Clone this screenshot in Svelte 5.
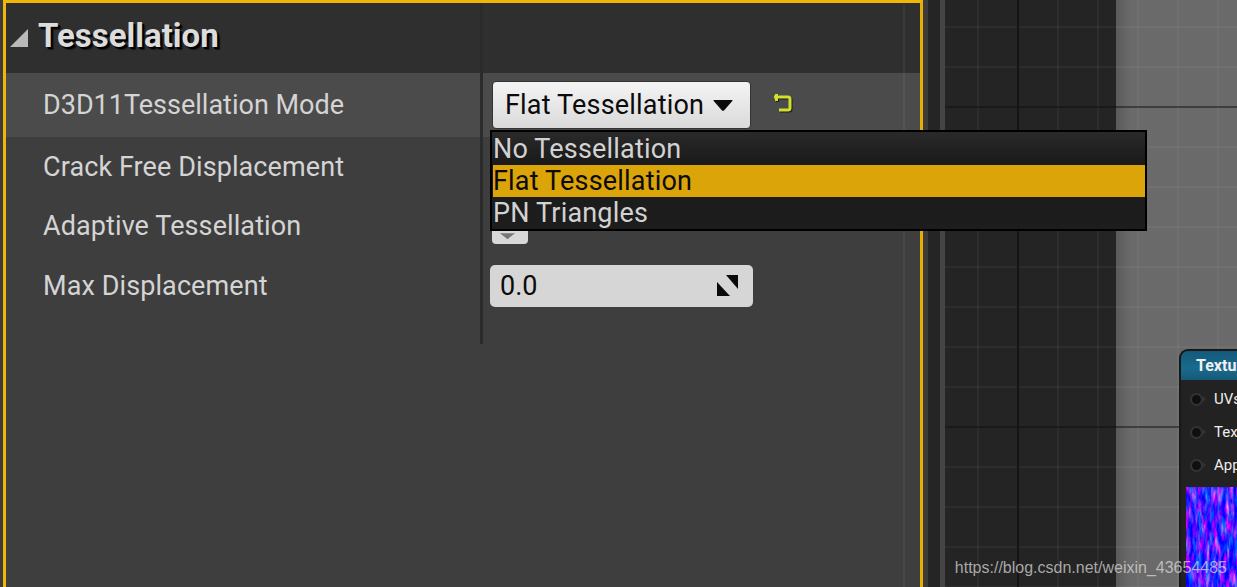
<script lang="ts">
  let options = ['No Tessellation', 'Flat Tessellation', 'PN Triangles']
  let selected = 'Flat Tessellation'
  let pins = ['UVs', 'Tex', 'App']
</script>

<div class="screen">
  <div class="gutter"></div>
  <section class="panel">
    <header class="section-head">
      <div class="name-cell">
        <svg class="arrow" width="18" height="18" viewBox="0 0 18 18"><path d="M18 0V18H0Z" fill="#b9b9b9" /></svg>
        <h2>Tessellation</h2>
      </div>
      <div class="value-cell"></div>
    </header>

    <div class="row hot">
      <div class="name-cell"><span class="label">D3D11Tessellation Mode</span></div>
      <div class="value-cell">
        <button class="combo">
          <span>{selected}</span>
          <svg width="20" height="11" viewBox="0 0 20 11"><path d="M1 0H19Q20 0 19.300 1L11 10.500Q10 11 9 10.500L0.700 1Q0 0 1 0Z" fill="#0b0b0b" /></svg>
        </button>
        <svg class="reset" width="22" height="26" viewBox="0 0 22 26">
          <g fill="none" stroke="#1c1c1c" stroke-width="3" transform="translate(1 1)">
            <path d="M2 5H16a2 2 0 0 1 2 2v9a2 2 0 0 1-2 2H7M4.500 2v7" />
          </g>
          <g fill="none" stroke="#d2e02c" stroke-width="3">
            <path d="M2 5H16a2 2 0 0 1 2 2v9a2 2 0 0 1-2 2H7M4.500 2v7" />
          </g>
        </svg>
        <ul class="popup">
          {#each options as opt}
            <li class:active={opt === selected}>{opt}</li>
          {/each}
        </ul>
      </div>
    </div>

    <div class="row">
      <div class="name-cell"><span class="label">Crack Free Displacement</span></div>
      <div class="value-cell"></div>
    </div>

    <div class="row">
      <div class="name-cell"><span class="label">Adaptive Tessellation</span></div>
      <div class="value-cell">
        <span class="check"><i></i></span>
      </div>
    </div>

    <div class="row">
      <div class="name-cell"><span class="label">Max Displacement</span></div>
      <div class="value-cell">
        <div class="number">
          <span>0.0</span>
          <svg width="21" height="21" viewBox="0 0 21 21">
            <path d="M9 0H21V14Z" fill="#0a0a0a" />
            <path d="M0 7V21H13Z" fill="#0a0a0a" />
          </svg>
        </div>
      </div>
    </div>

    <div class="row tail">
      <div class="name-cell"></div>
      <div class="value-cell"></div>
    </div>
  </section>

  <div class="splitter"></div>

  <main class="graph">
    <div class="node">
      <div class="node-title">Texture Sample</div>
      <div class="node-body">
        {#each pins as pin}
          <div class="pin"><b></b><span>{pin}</span></div>
        {/each}
        <svg class="texture" width="60" height="120">
          <filter id="normals" x="0" y="0" width="100%" height="100%" color-interpolation-filters="sRGB">
            <feTurbulence type="fractalNoise" baseFrequency="0.25 0.06" numOctaves="4" seed="7" />
            <feColorMatrix type="matrix" values="2.400 0 0 0 -0.950  0 1.200 0 0 -0.480  0 0 0 0 1  0 0 0 0 1" />
          </filter>
          <rect width="60" height="120" filter="url(#normals)" />
        </svg>
      </div>
    </div>
  </main>

  <div class="watermark">https://blog.csdn.net/weixin_43654485</div>
</div>

<style>
  :global(body) {
    margin: 0;
    background: #3a3a3a;
  }
  .screen {
    position: relative;
    display: flex;
    width: 1237px;
    height: 587px;
    overflow: hidden;
    font-family: Roboto, "Liberation Sans", sans-serif;
  }
  .gutter {
    width: 3px;
    background: #3b3b3b;
    flex: none;
  }
  .panel {
    width: 920px;
    flex: none;
    box-sizing: border-box;
    border: 3px solid #f2b705;
    border-bottom: 0;
    border-right-color: #e8ae06;
    background: #3e3e3e;
    position: relative;
  }
  .panel::after {
    content: '';
    position: absolute;
    top: 2px;
    bottom: 0;
    left: 897px;
    width: 2px;
    background: rgba(255, 255, 255, 0.05);
  }
  .section-head {
    display: grid;
    grid-template-columns: 474px 1fr;
    height: 70px;
    background: #2f2f2f;
  }
  .row {
    display: grid;
    grid-template-columns: 474px 1fr;
    height: 59.500px;
  }
  .row.hot {
    height: 64px;
    background: #4b4b4b;
  }
  .row.tail {
    height: 28px;
  }
  .name-cell {
    display: flex;
    align-items: center;
    padding-left: 37px;
  }
  .section-head .name-cell {
    padding: 0 0 6px 4px;
  }
  .value-cell {
    position: relative;
    display: flex;
    align-items: center;
    border-left: 3px solid #2b2b2b;
    padding-left: 8px;
  }
  .arrow {
    margin-top: 5px;
    flex: none;
  }
  h2 {
    margin: 0 0 0 10px;
    font-size: 33px;
    font-weight: 700;
    color: #dcdcdc;
    text-shadow: 2px 2px 0 #000, 3px 3px 1px rgba(0, 0, 0, 0.5);
  }
  .label {
    font-size: 27px;
    letter-spacing: 0.09px;
    color: #d4d4d4;
    white-space: nowrap;
  }
  .hot .label {
    letter-spacing: 0;
  }
  .combo {
    display: flex;
    align-items: center;
    justify-content: space-between;
    box-sizing: border-box;
    width: 259px;
    height: 48px;
    margin-left: 1px;
    padding: 0 17px 0 12px;
    border: 1px solid #333;
    border-radius: 4px;
    background: linear-gradient(#f4f4f4, #dadada);
    font: 27px Roboto, "Liberation Sans", sans-serif;
    letter-spacing: 0.18px;
    color: #0b0b0b;
  }
  .reset {
    margin-left: 21px;
  }
  .popup {
    position: absolute;
    z-index: 2;
    top: 57px;
    left: 7px;
    width: 657px;
    box-sizing: border-box;
    margin: 0;
    padding: 1px 0 0 1px;
    list-style: none;
    border: 2px solid #000;
    background: linear-gradient(#2a2a2a, #1a1a1a 32px, #1d1d1d);
    font-size: 27px;
    letter-spacing: 0.18px;
    color: #d2d2d2;
  }
  .popup li {
    height: 32px;
    line-height: 32px;
    white-space: nowrap;
  }
  .popup li.active {
    background: #dba409;
    color: #0b0b0b;
  }
  .check {
    display: block;
    position: relative;
    width: 36px;
    height: 36px;
    margin-left: 1px;
    border-radius: 4px;
    background: #d8d8d8;
  }
  .check i {
    position: absolute;
    left: 8px;
    top: 25px;
    width: 15px;
    height: 6px;
    background: #777;
    clip-path: polygon(0 0, 100% 0, 50% 100%);
  }
  .number {
    display: flex;
    align-items: center;
    justify-content: space-between;
    box-sizing: border-box;
    width: 263px;
    height: 42px;
    margin-left: -1px;
    padding: 0 15px 0 10px;
    border-radius: 5px;
    background: #d6d6d6;
    font-size: 27px;
    color: #0b0b0b;
  }
  .splitter {
    width: 22px;
    flex: none;
    background: linear-gradient(90deg, #3c3c3c 5px, #252525 5px, #252525 17px, #454545 17px);
  }
  .graph {
    position: relative;
    flex: 1;
    background-color: #6a6a6a;
    background-image:
      linear-gradient(90deg, transparent 72px, #141414 72px, #141414 74px, transparent 74px),
      linear-gradient(transparent 106px, rgba(0, 0, 0, 0.45) 106px, rgba(0, 0, 0, 0.45) 108px, transparent 108px),
      linear-gradient(transparent 426px, rgba(0, 0, 0, 0.45) 426px, rgba(0, 0, 0, 0.45) 428px, transparent 428px),
      repeating-linear-gradient(90deg, transparent 0 32px, rgba(255, 255, 255, 0.045) 32px 34px, transparent 34px 40px),
      repeating-linear-gradient(transparent 0 26px, rgba(255, 255, 255, 0.045) 26px 28px, transparent 28px 40px),
      linear-gradient(90deg, #242424 171px, #5a5a5a 171px, #6a6a6a 185px);
  }
  .node {
    position: absolute;
    left: 234px;
    top: 349px;
    width: 120px;
    height: 260px;
    box-sizing: border-box;
    border: 2px solid #181818;
    border-right: 0;
    border-top-left-radius: 9px;
    background: #222;
    overflow: hidden;
  }
  .node-title {
    height: 29px;
    padding-left: 15px;
    background: linear-gradient(#14597a, #1a6a8e 60%, #145a78);
    font: 700 16px/29px Roboto, sans-serif;
    color: #f0f0f0;
    white-space: nowrap;
  }
  .node-body {
    padding: 2.500px 0 0 9px;
  }
  .pin {
    display: flex;
    align-items: center;
    gap: 11px;
    height: 33px;
    font-size: 15px;
    color: #eee;
  }
  .pin b {
    position: relative;
    width: 9px;
    height: 9px;
    border-radius: 50%;
    background: #0f0f0f;
    border: 2px solid #333;
  }
  .pin b::after {
    content: '';
    position: absolute;
    left: 11px;
    top: 1px;
    border: 3.500px solid transparent;
    border-left: 3.500px solid #333;
  }
  .texture {
    display: block;
    margin: 5.500px 0 0 -4px;
  }
  .watermark {
    position: absolute;
    right: 10px;
    bottom: 10px;
    font: 16px "Liberation Sans", sans-serif;
    color: rgba(222, 222, 222, 0.72);
    white-space: nowrap;
  }
</style>
